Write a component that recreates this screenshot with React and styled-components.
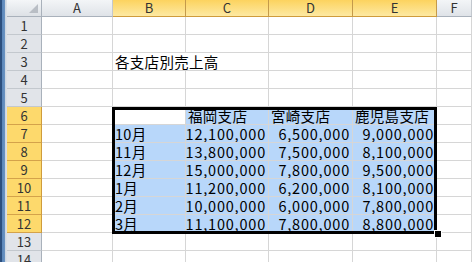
import React from "react";
import styled, { createGlobalStyle } from "styled-components";

const Global = createGlobalStyle`
  html, body { margin: 0; padding: 0; background: #ffffff; }
  body { width: 472px; height: 262px; overflow: hidden; }
`;

const Sheet = styled.div`
  display: flex;
  width: 472px;
  height: 262px;
  overflow: hidden;
  background: #ffffff;
  font-family: "Noto Sans CJK JP", "Noto Sans", sans-serif;
`;

const LeftStrip = styled.div`
  flex: 0 0 7px;
  height: 100%;
  background: linear-gradient(to right, #2c4f7e 0, #2c4f7e 2px, #5a86b9 2px, #6a93c2 5px, #c9d3df 5px, #dfe4ea 7px);
`;

const GridWrap = styled.div`
  position: relative;
  flex: 1;
`;

const Grid = styled.div`
  display: grid;
  grid-template-columns: 35px 71px 73px 83px 84px 84px 1fr;
  grid-template-rows: 17px repeat(14, 18px);
`;

const Corner = styled.div`
  position: relative;
  box-sizing: border-box;
  background: linear-gradient(#f4f6f8, #dde1e6);
  border-right: 1px solid #a9b1bb;
  border-bottom: 1px solid #a9b1bb;
  &::after {
    content: "";
    position: absolute;
    right: 3px;
    bottom: 3px;
    border-left: 9px solid transparent;
    border-bottom: 9px solid #b9bec5;
  }
`;

const ColHeader = styled.div`
  box-sizing: border-box;
  display: flex;
  align-items: center;
  justify-content: center;
  font-size: 13px;
  line-height: 16px;
  color: #333333;
  background: ${(p) =>
    p.$selected
      ? "linear-gradient(#fcd35f, #fde9a2)"
      : "linear-gradient(#f3f5f7, #dfe3e8)"};
  border-right: 1px solid ${(p) => (p.$selected ? "#c49a4a" : "#c3c8ce")};
  border-bottom: 1px solid ${(p) => (p.$selected ? "#cf9c3c" : "#a9b1bb")};
`;

const RowHeader = styled.div`
  box-sizing: border-box;
  display: flex;
  align-items: center;
  justify-content: center;
  font-size: 13px;
  line-height: 16px;
  color: #333333;
  background: ${(p) => (p.$selected ? "#fdd96c" : "#e1e4e9")};
  border-right: 1px solid ${(p) => (p.$selected ? "#cf9c3c" : "#a9b1bb")};
  border-bottom: 1px solid ${(p) => (p.$selected ? "#d4a24a" : "#c3c8ce")};
`;

const Cell = styled.div`
  box-sizing: border-box;
  grid-column: ${(p) => (p.$span ? `span ${p.$span}` : "auto")};
  display: flex;
  align-items: flex-end;
  justify-content: ${(p) => (p.$align === "right" ? "flex-end" : "flex-start")};
  padding: ${(p) => (p.$align === "right" ? "0 2px 0 0" : "0 0 0 2px")};
  font-size: 14.5px;
  line-height: 17px;
  letter-spacing: ${(p) => (p.$align === "right" ? "0.8px" : "0.3px")};
  color: #000000;
  white-space: nowrap;
  overflow: hidden;
  background: ${(p) => (p.$fill ? "#b8d7fa" : "#ffffff")};
  border-right: 1px solid #d6d6d6;
  border-bottom: 1px solid #d6d6d6;
`;

const Selection = styled.div`
  position: absolute;
  left: 105px;
  top: 107px;
  width: 325px;
  height: 127px;
  box-sizing: border-box;
  border: 3px solid #000000;
  pointer-events: none;
`;

const FillHandle = styled.div`
  position: absolute;
  left: 427px;
  top: 230px;
  width: 6px;
  height: 6px;
  background: #000000;
  border: 1px solid #ffffff;
`;

const cols = ["A", "B", "C", "D", "E", "F"];
const selCols = ["B", "C", "D", "E"];

const table = {
  6: ["", "福岡支店", "宮崎支店", "鹿児島支店"],
  7: ["10月", "12,100,000", "6,500,000", "9,000,000"],
  8: ["11月", "13,800,000", "7,500,000", "8,100,000"],
  9: ["12月", "15,000,000", "7,800,000", "9,500,000"],
  10: ["1月", "11,200,000", "6,200,000", "8,100,000"],
  11: ["2月", "10,000,000", "6,000,000", "7,800,000"],
  12: ["3月", "11,100,000", "7,800,000", "8,800,000"],
};

function cellProps(row, colIdx) {
  const data = table[row];
  if (row === 3 && colIdx === 1) return { text: "各支店別売上高", span: 2 };
  if (row === 3 && colIdx === 2) return null;
  if (!data || colIdx < 1 || colIdx > 4) return { text: "" };
  const v = data[colIdx - 1];
  const fill = !(row === 6 && colIdx === 1);
  const align = row === 6 || colIdx === 1 ? "left" : "right";
  return { text: v, fill, align };
}

export default function App() {
  const rows = Array.from({ length: 14 }, (_, i) => i + 1);
  return (
    <>
      <Global />
      <Sheet>
        <LeftStrip />
        <GridWrap>
          <Grid>
            <Corner />
            {cols.map((c) => (
              <ColHeader key={c} $selected={selCols.includes(c)}>
                {c}
              </ColHeader>
            ))}
            {rows.map((r) => (
              <React.Fragment key={r}>
                <RowHeader $selected={r >= 6 && r <= 12}>{r}</RowHeader>
                {cols.map((c, ci) => {
                  const p = cellProps(r, ci);
                  if (!p) return null;
                  return (
                    <Cell key={c} $fill={p.fill} $align={p.align} $span={p.span}>
                      {p.text}
                    </Cell>
                  );
                })}
              </React.Fragment>
            ))}
          </Grid>
          <Selection />
          <FillHandle />
        </GridWrap>
      </Sheet>
    </>
  );
}
